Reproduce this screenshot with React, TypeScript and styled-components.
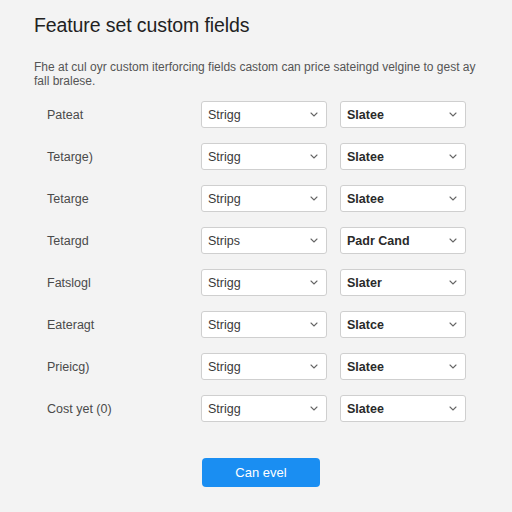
import * as React from 'react';
import styled, { createGlobalStyle } from 'styled-components';

const GlobalStyle = createGlobalStyle`
  html, body {
    margin: 0;
    padding: 0;
    background: #f3f3f3;
  }
  body {
    font-family: 'Liberation Sans', Arial, sans-serif;
  }
`;

interface FieldRow {
  label: string;
  type: string;
  value: string;
}

const rows: FieldRow[] = [
  { label: 'Pateat', type: 'Strigg', value: 'Slatee' },
  { label: 'Tetarge)', type: 'Strigg', value: 'Slatee' },
  { label: 'Tetarge', type: 'Stripg', value: 'Slatee' },
  { label: 'Tetargd', type: 'Strips', value: 'Padr Cand' },
  { label: 'Fatslogl', type: 'Strigg', value: 'Slater' },
  { label: 'Eateragt', type: 'Strigg', value: 'Slatce' },
  { label: 'Prieicg)', type: 'Strigg', value: 'Slatee' },
  { label: 'Cost yet (0)', type: 'Strigg', value: 'Slatee' },
];

const Page = styled.div`
  width: 512px;
  height: 512px;
  box-sizing: border-box;
  padding: 13px 0 0 34px;
  background: #f3f3f3;
  overflow: hidden;
`;

const Title = styled.h1`
  margin: 0;
  font-size: 19.5px;
  font-weight: 400;
  line-height: 24px;
  color: #222;
  letter-spacing: -0.1px;
`;

const Description = styled.p`
  margin: 23px 0 0;
  width: 452px;
  font-size: 12px;
  line-height: 14px;
  color: #555;
`;

const Fields = styled.div`
  display: flex;
  flex-direction: column;
  gap: 15px;
  margin-top: 13px;
  padding-left: 13px;
`;

const Row = styled.div`
  display: grid;
  grid-template-columns: 141px 126px 126px;
  column-gap: 13px;
  align-items: center;
  height: 27px;
`;

const Label = styled.span`
  font-size: 12.5px;
  color: #4a4a4a;
`;

const Select = styled.div<{ $strong?: boolean }>`
  display: flex;
  align-items: center;
  justify-content: space-between;
  box-sizing: border-box;
  height: 27px;
  padding: 0 8px 0 6px;
  background: #fff;
  border: 1px solid #cfcfcf;
  border-radius: 3px;
  font-size: 12.5px;
  font-weight: ${(p) => (p.$strong ? 700 : 400)};
  color: ${(p) => (p.$strong ? '#2a2a2a' : '#3a3a3a')};
`;

const Chevron = () => (
  <svg width="8" height="5" viewBox="0 0 8 5" fill="none">
    <path d="M1 1l3 3 3-3" stroke="#666" strokeWidth="1.1" strokeLinecap="round" />
  </svg>
);

const Footer = styled.div`
  margin-top: 36px;
  padding-left: 168px;
`;

const Button = styled.button`
  width: 118px;
  height: 29px;
  border: none;
  border-radius: 4px;
  background: #1a8ef2;
  color: #fff;
  font-family: 'Liberation Sans', Arial, sans-serif;
  font-size: 13px;
  font-weight: 500;
  cursor: pointer;
`;

function App() {
  return (
    <Page>
      <GlobalStyle />
      <Title>Feature set custom fields</Title>
      <Description>
        Fhe at cul oyr custom iterforcing fields castom can price sateingd velgine to gest ay fall bralese.
      </Description>
      <Fields>
        {rows.map((r, i) => (
          <Row key={i}>
            <Label>{r.label}</Label>
            <Select>
              {r.type}
              <Chevron />
            </Select>
            <Select $strong>
              {r.value}
              <Chevron />
            </Select>
          </Row>
        ))}
      </Fields>
      <Footer>
        <Button>Can evel</Button>
      </Footer>
    </Page>
  );
}

export default App;
